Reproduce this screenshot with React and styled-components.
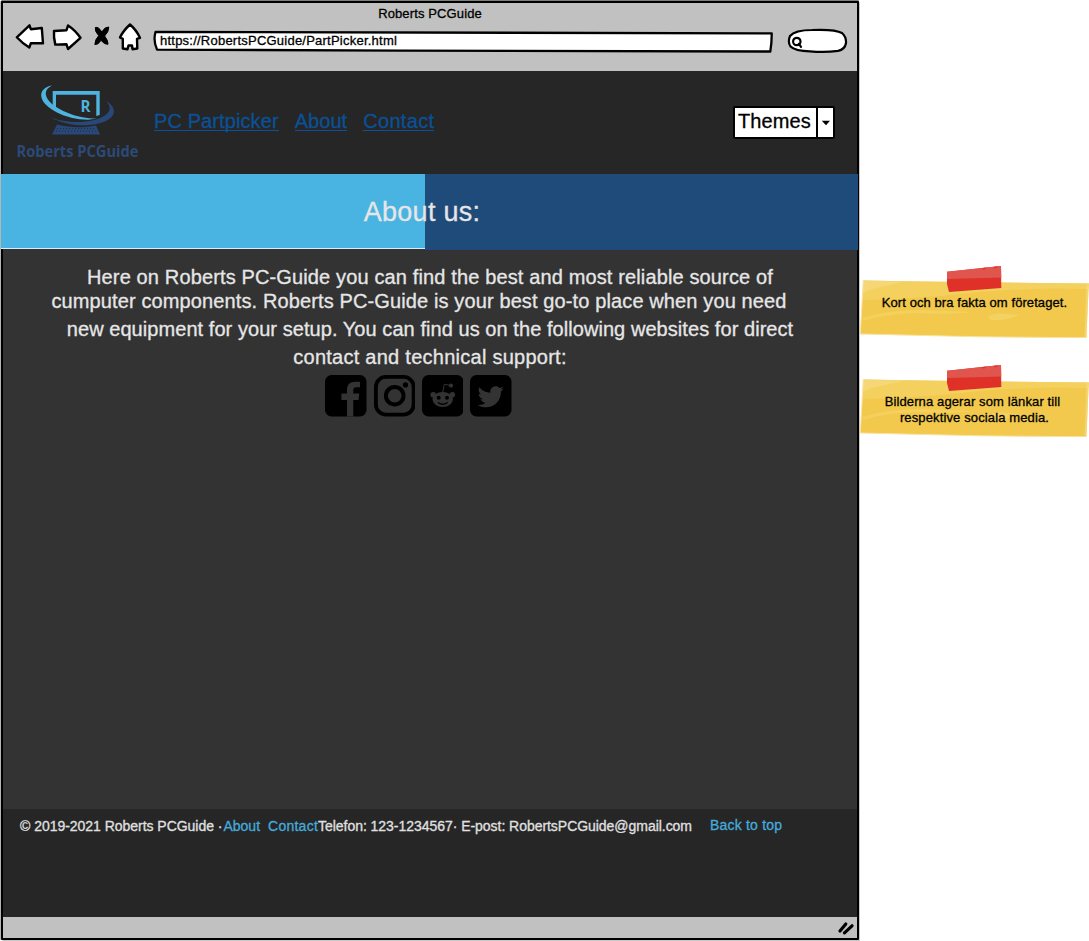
import React from "react";
import styled, { createGlobalStyle } from "styled-components";
import { FaTwitter } from "react-icons/fa";

const GlobalStyle = createGlobalStyle`
  * { box-sizing: border-box; }
  body {
    margin: 0;
    background: #fff;
    font-family: "Liberation Sans", Arial, sans-serif;
    color: #000;
    overflow: hidden;
  }
`;

const Page = styled.div`
  display: flex;
  align-items: flex-start;
  width: 1089px;
  height: 941px;
  padding: 1px 0 0 1px;
`;

const BrowserWindow = styled.div`
  display: flex;
  flex-direction: column;
  flex: none;
  width: 858px;
  height: 939px;
  border: 2px solid #000;
  border-radius: 1px;
  background: #333;
  box-shadow: 0 -1px #7d817b, -1px 0 #b5b5b5, 1px 1px #c9c9c9;
`;

const Text = styled.span`
  display: block;
  font-size: ${(p) => p.$size}px;
  letter-spacing: ${(p) => p.$track || 0}px;
  white-space: nowrap;
  -webkit-text-stroke: 0.3px currentColor;
`;

/* Browser chrome */
const Chrome = styled.div`
  flex: none;
  height: 68px;
  background: #c1c1c1;
`;

const WindowTitle = styled.div`
  height: 21px;
  line-height: 21px;
  text-align: center;
`;

const Toolbar = styled.div`
  display: flex;
  align-items: flex-start;
  height: 47px;
`;

const NavIcons = styled.svg`
  flex: none;
  width: 130px;
  height: 32px;
  margin: -3px 7px 0 11px;
`;

const AddressBar = styled.div`
  position: relative;
  flex: none;
  width: 622px;
  height: 24px;
  margin: 5px 12px 0 1px;
  padding-left: 8px;
  line-height: 23px;
`;

const Outline = styled.svg`
  position: absolute;
  inset: 0;
  width: 100%;
  height: 100%;
`;

const Label = styled(Text)`
  position: relative;
`;

const SearchPill = styled.svg`
  flex: none;
  width: 62px;
  height: 26px;
  margin-top: 4px;
`;

/* Site header */
const Header = styled.header`
  display: flex;
  align-items: flex-start;
  flex: none;
  height: 103px;
  background: #262626;
`;

const Logo = styled.svg`
  flex: none;
  width: 136px;
  height: 84px;
  margin: 10px 4px 0 11px;
`;

const Nav = styled.nav`
  display: flex;
  gap: 16px;
  padding-top: 36px;
`;

const NavLink = styled.a`
  height: 24px;
  line-height: 29px;
  border-bottom: 1.5px solid #0a5197;
  color: #0a5197;
  font-size: 20px;
  letter-spacing: ${(p) => p.$track}px;
  white-space: nowrap;
  -webkit-text-stroke: 0.3px currentColor;
`;

const Select = styled.button`
  display: flex;
  width: 102px;
  height: 33px;
  margin: 35px 22px 0 auto;
  padding: 0;
  border: 2px solid #000;
  border-radius: 2px;
  background: #fff;
  color: #000;
  font-family: inherit;
  line-height: 27px;
`;

const SelectLabel = styled.span`
  flex: 1;
  padding-left: 3px;
  text-align: left;
`;

const SelectArrow = styled.span`
  display: flex;
  align-items: center;
  justify-content: center;
  width: 17px;
  height: 29px;
  border-left: 2px solid #000;
`;

/* Banner */
const Banner = styled.div`
  display: flex;
  align-items: flex-start;
  flex: none;
  height: 76px;
  margin: 0 -1px 0 -2px;
`;

const BannerHalf = styled.div`
  width: ${(p) => p.$w}px;
  height: ${(p) => p.$h}px;
  background: ${(p) => p.$bg};
  border-bottom: ${(p) => (p.$rule ? "1px solid #d8eef8" : "none")};
  flex: none;
`;

const BannerTitle = styled.h1`
  width: 857px;
  margin: 0 0 0 -857px;
  padding-right: 15px;
  flex: none;
  text-align: center;
  line-height: 76px;
  font-weight: 400;
  font-size: 27px;
  letter-spacing: 0.25px;
  color: #e6e6e6;
  -webkit-text-stroke: 0.3px currentColor;
  z-index: 1;
`;

/* Main content */
const Main = styled.main`
  display: flex;
  flex-direction: column;
  align-items: center;
  flex: 1;
  padding-top: 16px;
  color: #e6e6e6;
`;

const Line = styled.div`
  line-height: ${(p) => p.$lh}px;
  margin-top: ${(p) => p.$top || 0}px;
  padding-right: ${(p) => p.$right || 0}px;
`;

const Socials = styled.div`
  display: flex;
  gap: 6.8px;
  margin: 4px 23px 0 0;

  > svg {
    width: 41.5px;
    height: 41.5px;
  }
`;

/* Footer */
const Footer = styled.footer`
  display: flex;
  align-items: flex-start;
  flex: none;
  height: 108px;
  padding: 2px 0 0 17px;
  background: #262626;
  color: #e0e0e0;
  line-height: 30px;
`;

const FooterLink = styled(Text)`
  margin: ${(p) => p.$margin || 0};
  color: #45abdb;
`;

const StatusBar = styled.div`
  display: flex;
  justify-content: flex-end;
  flex: none;
  height: 21px;
  padding: 4px 3px 0 0;
  background: #c1c1c1;
`;

/* Sticky notes */
const Notes = styled.aside`
  display: flex;
  flex-direction: column;
  gap: 27px;
  width: 229px;
  flex: none;
  margin-left: 1px;
  padding-top: 265px;
`;

const NoteBox = styled.div`
  position: relative;
  display: flex;
  flex-direction: column;
  align-items: center;
  height: 72px;
  padding: 29px 0 0 0;
  line-height: 16px;
`;

const NoteLine = styled(Label)`
  left: ${(p) => p.$shift}px;
`;

function Note({ lines }) {
  return (
    <NoteBox>
      <Outline viewBox="860 266 229 72">
        <path d="M863.3 280.5 L920 281.6 1088.8 283.6 1086.4 337.8 980 336.8 860.3 334 Z" fill="#f2c94c" />
        <path d="M863.3 280.5 L920 281.6 1088.8 283.6 1088.3 289 1050 288.500 1010 290 985 291.500 940 296 900 299 862.5 300Z" fill="#f4d263" opacity=".8" />
        <path d="M863.3 281 L905 281.5 872 289 862.8 293Z" fill="#f6da80" opacity=".7" />
        <path d="M863 318 Q885 310 925 310 L972 312 Q950 315 915 313 Q885 314 863 321Z" fill="#f5d568" opacity=".6" />
        <path d="M988 317 Q993 312 1007 314 L1019 315 Q1006 321 991 320Z" fill="#f5d872" opacity=".6" />
        <path d="M1086.500 284 L1088.8 283.6 1086.4 337.8 1084.500 337.6Z" fill="#f7dd86" opacity=".6" />
        <path d="M863.3 280.5 L860.3 334 980 336.8 1086.4 337.8" fill="none" stroke="#f8e3a0" strokeWidth="1" />
        <path d="M947 271.8 L1001 266.1 1001.3 288 949 292 947 284Z" fill="#df3128" />
        <path d="M947 271.8 L1001 266.1 1001.3 277.5 947 279Z" fill="#e0564e" />
        <path d="M981 268.2 l6 -.6 -3 2.2z M993 267 l5 -.5 -2 2z" fill="#df3128" />
      </Outline>
      {lines.map((l) => (
        <NoteLine key={l.text} $size={13} $track={l.track} $shift={l.shift}>
          {l.text}
        </NoteLine>
      ))}
    </NoteBox>
  );
}

function LogoMark() {
  return (
    <Logo viewBox="14 81 136 84">
      <path d="M52.7 108 V91 H99.7 V115 L96.3 116 V94.800 H56 V110.5Z" fill="#4fb3df" />
      <path d="M52 85.5 C44.500 86.5 40 91.500 41.500 97.500 C44 108 65 119.500 88 119.800 L97 118.600 C80 119 58 111 49.500 101.500 C43.500 94.500 45 89 52 85.500Z" fill="#4fb3df" />
      <path d="M106 101 C114 105.500 116.500 112 111 117.500 C103 125.500 80 127.500 65 123 C59 121.300 54 119.300 51 117.500 C62 121.800 79 123.400 92 120.500 C105 117.800 115.500 110.500 106 101Z" fill="#29487a" />
      <path d="M57 124.500 C70 128 84 128 96 125.500 L100 134.500 H52Z" fill="#29487a" />
      <path d="M57 128.500 H96 M56 131 H97" stroke="#262c3b" strokeWidth="1" strokeDasharray="1.2 1.8" />
      <text x="80.500" y="112" fontFamily="Open Sans" fontWeight="700" fontSize="16" textLength="10" lengthAdjust="spacingAndGlyphs" fill="#4fb3df">R</text>
      <text x="16.500" y="157" fontFamily="Open Sans" fontWeight="700" fontSize="16" textLength="122" lengthAdjust="spacingAndGlyphs" fill="#2c4a78">Roberts PCGuide</text>
    </Logo>
  );
}

function SocialIcons() {
  return (
    <Socials>
      <svg viewBox="0 0 41.5 41.5">
        <rect width="41.500" height="41.500" rx="6.500" />
        <path d="M22 41.500 V25 H16.400 V18.500 H22 V15 C22 9.500 25 6.800 30 6.800 H35 V12.300 H31.500 C29 12.300 28.300 13.300 28.300 15.300 V18.500 H34.300 L33.500 25 H28.300 V41.500Z" fill="#333" />
      </svg>
      <svg viewBox="0 0 41.5 41.5" fill="none" stroke="#000">
        <rect x="1.900" y="1.900" width="37.700" height="37.700" rx="10" strokeWidth="3.800" />
        <circle cx="20.700" cy="20.700" r="8.800" strokeWidth="4" />
        <circle cx="31.500" cy="9.900" r="2.600" fill="#000" stroke="none" />
      </svg>
      <svg viewBox="0 0 41.5 41.5">
        <rect width="41.500" height="41.500" rx="6.500" />
        <g fill="#333">
          <circle cx="11.200" cy="19.800" r="2.800" />
          <circle cx="30.300" cy="19.800" r="2.800" />
          <ellipse cx="20.700" cy="24.500" rx="10.200" ry="7.600" />
          <circle cx="29" cy="10.600" r="2.100" />
        </g>
        <path d="M20.700 17.500 L22.300 9.200 L28.500 10.600" fill="none" stroke="#333" strokeWidth="1" />
        <circle cx="16.700" cy="22.800" r="2" />
        <circle cx="25" cy="22.800" r="2" />
        <path d="M16.300 27.700 Q20.700 30.800 25.200 27.700" fill="none" stroke="#000" strokeWidth="1.300" strokeLinecap="round" />
      </svg>
      <svg viewBox="0 0 41.5 41.5">
        <rect width="41.500" height="41.500" rx="6.500" />
        <FaTwitter x="7.600" y="8.800" size="26" color="#333" />
      </svg>
    </Socials>
  );
}

export default function App() {
  return (
    <>
      <GlobalStyle />
      <Page>
        <BrowserWindow>
          <Chrome>
            <WindowTitle>
              <Text $size={13} $track={0.12}>Roberts PCGuide</Text>
            </WindowTitle>
            <Toolbar>
              <NavIcons viewBox="14 21 130 32" stroke="#000" strokeWidth="2.400" strokeLinejoin="round" fill="#fff">
                <path d="M16.800 37.300 L29.500 25.300 30.800 29.200 41.800 28 43 43.300 30.800 43.300 29.300 47.500 Q22 43 16.800 37.300Z" />
                <path d="M54 31 L66.500 30.200 68 25.500 Q75 30 80.500 37.800 L68 49 66.500 44.300 55.300 44.600 Q53.500 37 54 31Z" />
                <path d="M95.300 27.500 Q98.500 26.500 101.800 32 Q105 26.500 108.800 27 Q109 31.500 104.600 36 Q108.500 41 108 44.300 Q104.500 44.800 101 40.300 Q98 45.300 94.800 44.500 Q95 39.500 98.700 35.700 Q94.500 31 95.300 27.500Z" fill="#000" strokeWidth="1" />
                <path d="M130 24.500 Q136 29.500 140 37.800 L137 38.800 137.300 48.500 132.500 49.200 132 45.500 128.500 45.500 127.500 49.300 122.800 48.500 122.800 38.800 120 37.500 Q123 31 130 24.500Z" />
              </NavIcons>
              <AddressBar>
                <Outline viewBox="152 29 622 24">
                  <path d="M155.500 32 L771.700 33.300 Q771.800 43 770.300 51.500 L400 50.600 157 49.600 Q153 41 155.500 32Z" fill="#fff" stroke="#000" strokeWidth="2.300" strokeLinejoin="round" />
                </Outline>
                <Label $size={13} $track={0.23}>https://RobertsPCGuide/PartPicker.html</Label>
              </AddressBar>
              <SearchPill viewBox="786 28 62 26" fill="#fff" stroke="#000" strokeLinecap="round">
                <path d="M790 36 Q795 30 812 30 Q835 29 842 33 Q846.500 37 846 43 Q845 49.500 838 50.800 Q825 52.800 810 51.300 Q795 51 790.500 46.500 Q787.500 42 790 36Z" strokeWidth="2.200" />
                <circle cx="796.800" cy="41.500" r="3.700" strokeWidth="2.200" />
                <path d="M798.800 43.800 L801 46.800" strokeWidth="2.200" />
              </SearchPill>
            </Toolbar>
          </Chrome>

          <Header>
            <LogoMark />
            <Nav>
              <NavLink $track={0.1}>PC Partpicker</NavLink>
              <NavLink $track={0.05}>About</NavLink>
              <NavLink $track={0.33}>Contact</NavLink>
            </Nav>
            <Select>
              <SelectLabel>
                <Text $size={20} $track={0.12}>Themes</Text>
              </SelectLabel>
              <SelectArrow>
                <svg width="10" height="6" viewBox="0 0 10 6">
                  <path d="M.8 .8 H9 L5 5.300Z" fill="#000" />
                </svg>
              </SelectArrow>
            </Select>
          </Header>

          <Banner>
            <BannerHalf $w={424} $h={75} $bg="#49b3e2" $rule />
            <BannerHalf $w={433} $h={76} $bg="#1f4b7b" />
            <BannerTitle>About us:</BannerTitle>
          </Banner>

          <Main>
            <Line $lh={23}>
              <Text $size={20} $track={0.135}>Here on Roberts PC-Guide you can find the best and most reliable source of</Text>
            </Line>
            <Line $lh={24} $right={22}>
              <Text $size={20} $track={0.12}>cumputer components. Roberts PC-Guide is your best go-to place when you need</Text>
            </Line>
            <Line $lh={28} $top={2}>
              <Text $size={20} $track={0.06}>new equipment for your setup. You can find us on the following websites for direct</Text>
            </Line>
            <Line $lh={28}>
              <Text $size={20} $track={0.26}>contact and technical support:</Text>
            </Line>
            <SocialIcons />
          </Main>

          <Footer>
            <Text $size={14} $track={-0.03}>© 2019-2021 Roberts PCGuide ·</Text>
            <FooterLink $size={14} $margin="0 0 0 1px">About</FooterLink>
            <FooterLink $size={14} $track={0.25} $margin="0 0 0 8px">Contact</FooterLink>
            <Text $size={14} $track={-0.04}>Telefon: 123-1234567· E-post: RobertsPCGuide@gmail.com</Text>
            <FooterLink $size={14} $track={0.2} $margin="-1px 0 0 18px">Back to top</FooterLink>
          </Footer>

          <StatusBar>
            <svg width="17" height="14" viewBox="0 0 17 14" stroke="#000" strokeLinecap="round" fill="none">
              <path d="M3 10 L8.800 3" strokeWidth="3.200" />
              <path d="M7.500 11.800 L15 4.800" strokeWidth="3.200" />
            </svg>
          </StatusBar>
        </BrowserWindow>

        <Notes>
          <Note lines={[{ text: "Kort och bra fakta om företaget.", track: 0.08, shift: 0 }]} />
          <Note
            lines={[
              { text: "Bilderna agerar som länkar till", track: 0.12, shift: -2 },
              { text: "respektive sociala media.", track: 0.13, shift: 0 },
            ]}
          />
        </Notes>
      </Page>
    </>
  );
}
